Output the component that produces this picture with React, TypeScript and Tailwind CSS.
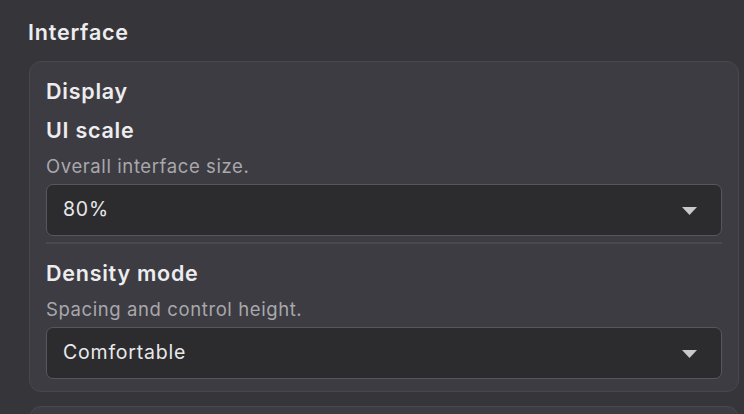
interface SelectProps {
  value: string;
}

function Select({ value }: SelectProps) {
  return (
    <div className="flex h-[52px] items-center justify-between rounded-[7px] border border-[#58575d] bg-[#2c2c2f] pl-4 pr-6">
      <span className="text-[19.5px] tracking-[0.8px] text-[#e8e8ea]">{value}</span>
      <svg width="15" height="8" viewBox="0 0 15 8" className="mt-px">
        <path d="M0 0H15L7.5 8Z" fill="#c9c9cc" />
      </svg>
    </div>
  );
}

interface FieldProps {
  label: string;
  hint: string;
  value: string;
}

function Field({ label, hint, value }: FieldProps) {
  return (
    <div>
      <h4 className="text-[21.5px] font-semibold leading-[28px] tracking-[0.75px] text-[#ededf0]">{label}</h4>
      <p className="mt-[10px] text-[18.5px] leading-[24px] tracking-[0.6px] text-[#a9a8ad]">{hint}</p>
      <div className="mt-[6px]">
        <Select value={value} />
      </div>
    </div>
  );
}

export default function App() {
  return (
    <div
      className="h-screen overflow-hidden bg-[#363539] pl-[28px] pr-[5px] pt-[18px]"
      style={{ fontFamily: 'Inter, "Noto Sans", sans-serif' }}
    >
      <h2 className="text-[21.5px] font-semibold leading-[28px] tracking-[0.8px] text-[#ededf0]">Interface</h2>

      <div className="ml-px mt-[15px] rounded-[12px] border border-[#48474d] bg-[#3d3c42] px-4 pb-3 pt-[15px]">
        <h3 className="text-[21.5px] font-semibold leading-[28px] tracking-[0.75px] text-[#ededf0]">Display</h3>
        <div className="mt-[11px]">
          <Field label="UI scale" hint="Overall interface size." value="80%" />
        </div>
        <div className="mt-[6px] h-[2px] bg-[#4a494f]" />
        <div className="mt-[15px]">
          <Field label="Density mode" hint="Spacing and control height." value="Comfortable" />
        </div>
      </div>

      <div className="ml-px mt-[14px] h-10 rounded-[12px] border border-[#48474d] bg-[#3d3c42]" />
    </div>
  );
}
